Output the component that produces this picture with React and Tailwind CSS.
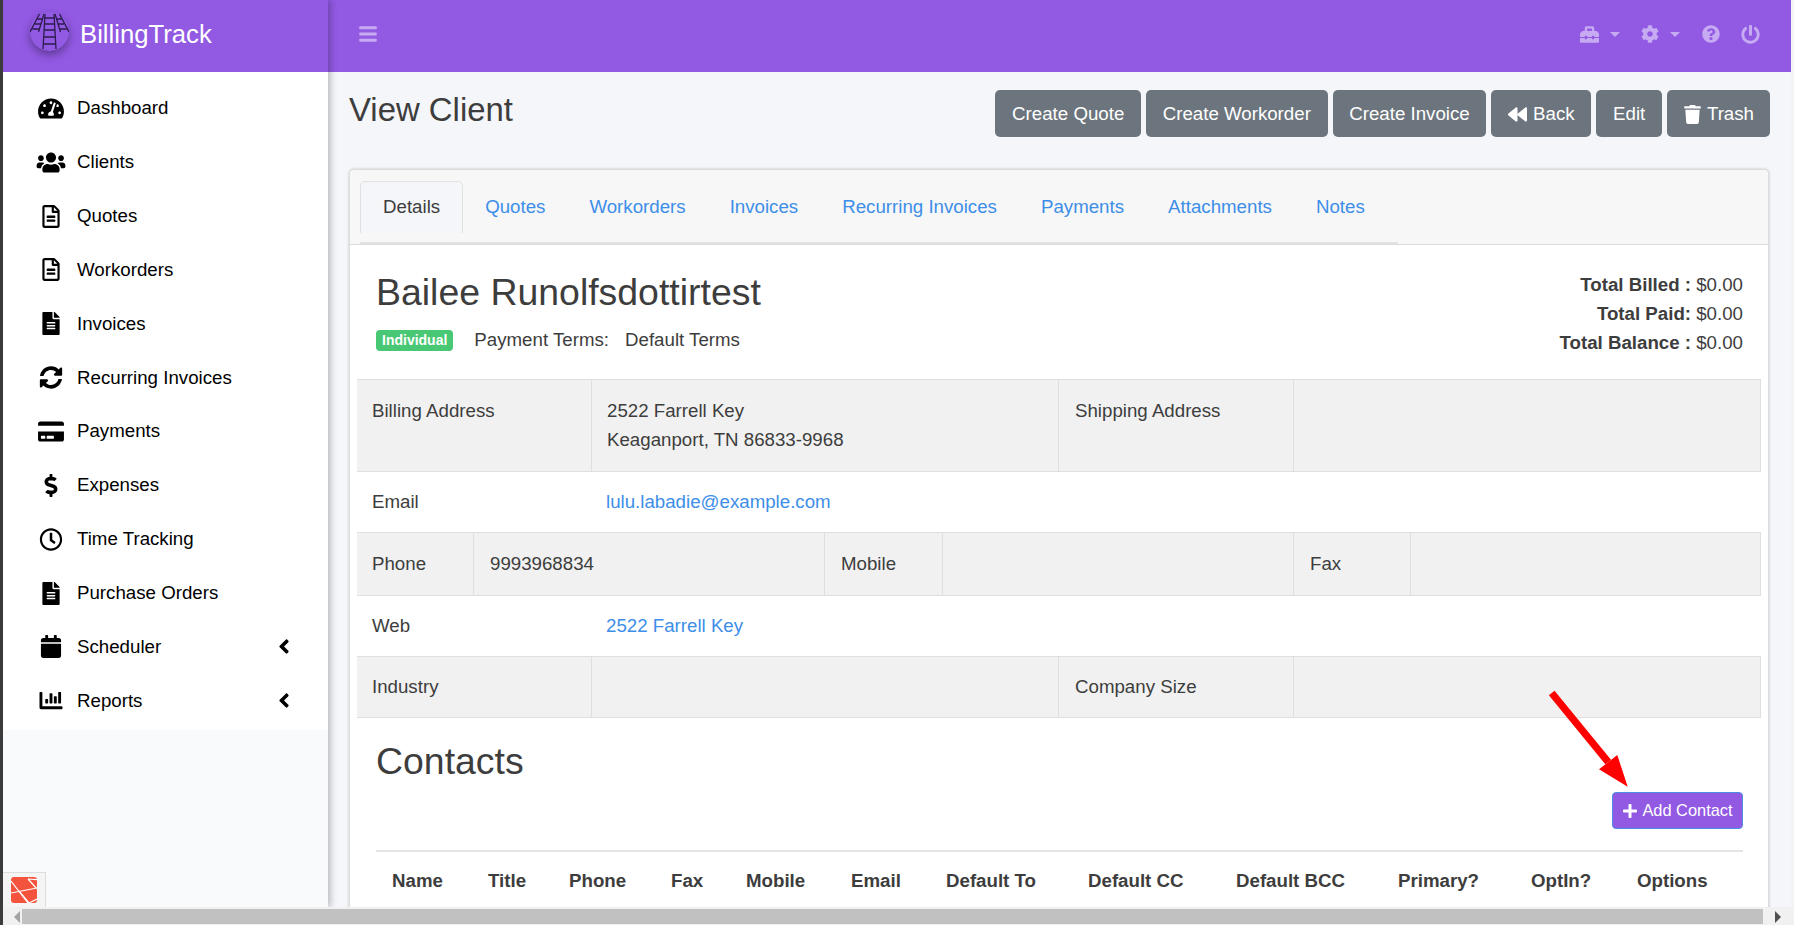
import React from "react";
import {
  FaTachometerAlt,
  FaUsers,
  FaRegFileAlt,
  FaFileAlt,
  FaSyncAlt,
  FaCreditCard,
  FaDollarSign,
  FaRegClock,
  FaCalendar,
  FaChartBar,
  FaAngleLeft,
  FaBars,
  FaToolbox,
  FaCog,
  FaQuestionCircle,
  FaPowerOff,
  FaBackward,
  FaTrash,
  FaPlus,
} from "react-icons/fa";

const NAV = [
  { label: "Dashboard", icon: FaTachometerAlt },
  { label: "Clients", icon: FaUsers },
  { label: "Quotes", icon: FaRegFileAlt },
  { label: "Workorders", icon: FaRegFileAlt },
  { label: "Invoices", icon: FaFileAlt },
  { label: "Recurring Invoices", icon: FaSyncAlt },
  { label: "Payments", icon: FaCreditCard },
  { label: "Expenses", icon: FaDollarSign },
  { label: "Time Tracking", icon: FaRegClock },
  { label: "Purchase Orders", icon: FaFileAlt },
  { label: "Scheduler", icon: FaCalendar, arrow: true },
  { label: "Reports", icon: FaChartBar, arrow: true },
];

const TABS = ["Quotes", "Workorders", "Invoices", "Recurring Invoices", "Payments", "Attachments", "Notes"];

const HEADS = [
  ["w-[96px]", "Name"],
  ["w-[81px]", "Title"],
  ["w-[102px]", "Phone"],
  ["w-[75px]", "Fax"],
  ["w-[105px]", "Mobile"],
  ["w-[95px]", "Email"],
  ["w-[142px]", "Default To"],
  ["w-[148px]", "Default CC"],
  ["w-[162px]", "Default BCC"],
  ["w-[133px]", "Primary?"],
  ["w-[106px]", "OptIn?"],
  ["flex-1", "Options"],
];

const Logo = () => (
  <div className="relative w-[39px] h-[39px] -mt-[5px] rounded-full bg-[#9259e3] shadow-[0_4px_8px_rgba(0,0,0,0.35)]">
    <svg viewBox="0 0 39 39" className="absolute inset-0 w-[39px] h-[39px]" fill="none" stroke="#2d1b4e" strokeWidth="1.3">
      {/* middle track */}
      <path d="M15 2L13 37M24 2L26 37M14.5 6H24.5M14 12H25M14 18H25M13.5 25H25.5M13 32H26" />
      {/* left and right tracks */}
      <path d="M9.5 2L0 20M14 2L8.5 20M7 7H13M5 12H11.5M2.5 17H9.5" />
      <path d="M29.5 2L39 20M25 2L30.5 20M26 7H32M27.5 12H34M29.5 17H36.5" />
    </svg>
  </div>
);

const Cell = ({ w, children }) => (
  <div className={`${w} flex-none flex items-center px-[16px] first:px-[15px] border-r border-[#dfdfdf]`}>{children}</div>
);

const App = () => {
  return (
    <div className="relative w-[1794px] h-[925px] overflow-hidden flex bg-[#f4f6f9] text-[#3d3d3d] font-['Liberation_Sans',Arial,sans-serif] text-[18.7px]">
      <div className="w-[3px] flex-none bg-[#3c3c3c]" />

      <div className="flex-1 min-w-0 flex flex-col">
        <div className="flex flex-1 min-h-0">
          {/* Sidebar */}
          <aside className="relative z-10 w-[325px] flex-none flex flex-col bg-[#f9fafb] shadow-[3px_0_6px_rgba(0,0,0,0.22)]">
            <div className="h-[72px] flex-none bg-[#9259e3] flex items-center pl-[27px] pb-[4px] gap-[11px] text-white text-[25.7px]">
              <Logo />
              <span>BillingTrack</span>
            </div>
            <nav className="h-[658px] bg-white pt-[9.5px]">
              {NAV.map(({ label, icon: Icon, arrow }) => (
                <div key={label} className="h-[53.85px] flex items-center text-black">
                  <div className="w-[74px] pl-[33px] flex-none">
                    <Icon className="w-[30px] h-[23px]" />
                  </div>
                  <span className="flex-1">{label}</span>
                  {arrow && (
                    <div className="w-[12px] mr-[38px] flex justify-center">
                      <FaAngleLeft className="h-[23px] w-auto" />
                    </div>
                  )}
                </div>
              ))}
            </nav>
          </aside>

          {/* Main column */}
          <main className="flex-1 min-w-0 flex flex-col">
            <header className="h-[72px] flex-none bg-[#9259e3] flex items-center pl-[30px] pr-[31px] pb-[4px] text-[#c7abf2]">
              <FaBars className="h-[20px] w-auto" />
              <div className="ml-auto flex items-center">
                <FaToolbox className="h-[19px] w-auto" />
                <span className="ml-[11px] w-0 h-0 border-x-[5px] border-x-transparent border-t-[5px] border-t-[#c7abf2]" />
                <FaCog className="ml-[21px] h-[18px] w-auto" />
                <span className="ml-[11px] w-0 h-0 border-x-[5px] border-x-transparent border-t-[5px] border-t-[#c7abf2]" />
                <FaQuestionCircle className="ml-[22px] h-[18px] w-auto" />
                <FaPowerOff className="ml-[21px] h-[19px] w-auto" />
              </div>
            </header>

            <div className="flex-1 min-h-0 pl-[21px] pr-[22px]">
              <div className="flex items-start justify-between pt-[18px] h-[97px]">
                <h1 className="text-[32.9px] leading-[38px] mt-[1px]">View Client</h1>
                <div className="flex gap-[5px] -mr-[1px] text-white">
                  {["Create Quote", "Create Workorder", "Create Invoice"].map((b) => (
                    <button key={b} className="h-[47px] px-[16.7px] pt-[1px] rounded-[5px] bg-[#6c757d]">{b}</button>
                  ))}
                  <button className="h-[47px] px-[16.7px] pt-[1px] rounded-[5px] bg-[#6c757d] flex items-center gap-[6px]">
                    <FaBackward className="h-[19px] w-auto" />Back
                  </button>
                  <button className="h-[47px] px-[16.7px] pt-[1px] rounded-[5px] bg-[#6c757d]">Edit</button>
                  <button className="h-[47px] px-[16px] pt-[1px] rounded-[5px] bg-[#6c757d] flex items-center gap-[5px]">
                    <FaTrash className="h-[19px] w-auto" />Trash
                  </button>
                </div>
              </div>

              {/* Card */}
              <section className="bg-white rounded-t-[5px] border border-[#dcdcdc] border-b-0 shadow-[0_0_3px_rgba(0,0,0,0.2)] h-[760px]">
                <div className="h-[75px] bg-[#f7f7f7] pt-[11px] pl-[10px] border-b border-[#dcdcdc] rounded-t-[5px]">
                  <div className="flex items-start w-[1038px] h-[63px] border-b-2 border-[#e2e2e2]">
                    <div className="h-[52px] px-[22px] flex items-center bg-[#f4f6f9] border border-b-0 border-[#e1e1e1] rounded-t-[5px]">Details</div>
                    {TABS.map((t) => (
                      <div key={t} className="h-[52px] px-[22px] flex items-center text-[#3d8ee8]">{t}</div>
                    ))}
                  </div>
                </div>

                <div className="flex justify-between pl-[26px] pr-[25px] h-[134px]">
                  <div>
                    <h2 className="text-[37.44px] leading-[45px] mt-[25px]">Bailee Runolfsdottirtest</h2>
                    <div className="flex items-center mt-[11px]">
                      <span className="h-[21px] px-[6px] rounded-[4px] bg-[#48c774] text-white font-bold text-[14px] flex items-center">Individual</span>
                      <span className="ml-[21px]">Payment Terms:</span>
                      <span className="ml-[16px]">Default Terms</span>
                    </div>
                  </div>
                  <div className="text-right mt-[25px] leading-[29px]">
                    <p><b>Total Billed :</b> $0.00</p>
                    <p><b>Total Paid:</b> $0.00</p>
                    <p><b>Total Balance :</b> $0.00</p>
                  </div>
                </div>

                {/* Info table */}
                <div className="mx-[7px] border-t border-[#dfdfdf]">
                  <div className="h-[92px] flex bg-[#f1f1f1] border-b border-[#dfdfdf] leading-[29px]">
                    <div className="w-[235px] flex-none px-[15px] pt-[16px] border-r border-[#dfdfdf]">Billing Address</div>
                    <div className="w-[467px] flex-none px-[15px] pt-[16px] border-r border-[#dfdfdf]">
                      <p>2522 Farrell Key</p>
                      <p>Keaganport, TN 86833-9968</p>
                    </div>
                    <div className="w-[235px] flex-none px-[16px] pt-[16px] border-r border-[#dfdfdf]">Shipping Address</div>
                    <div className="flex-1 border-r border-[#dfdfdf]" />
                  </div>
                  <div className="h-[61px] flex items-center border-b border-[#dfdfdf]">
                    <div className="w-[235px] px-[15px]">Email</div>
                    <div className="px-[14px] text-[#3d8ee8]">lulu.labadie@example.com</div>
                  </div>
                  <div className="h-[63px] flex items-stretch bg-[#f1f1f1] border-b border-[#dfdfdf]">
                    <Cell w="w-[117px]">Phone</Cell>
                    <Cell w="w-[351px]">9993968834</Cell>
                    <Cell w="w-[118px]">Mobile</Cell>
                    <Cell w="w-[351px]" />
                    <Cell w="w-[117px]">Fax</Cell>
                    <div className="flex-1 border-r border-[#dfdfdf]" />
                  </div>
                  <div className="h-[61px] flex items-center border-b border-[#dfdfdf]">
                    <div className="w-[235px] px-[15px]">Web</div>
                    <div className="px-[14px] text-[#3d8ee8]">2522 Farrell Key</div>
                  </div>
                  <div className="h-[61px] flex items-stretch bg-[#f1f1f1] border-b border-[#dfdfdf]">
                    <Cell w="w-[235px]">Industry</Cell>
                    <Cell w="w-[467px]" />
                    <Cell w="w-[235px]">Company Size</Cell>
                    <div className="flex-1 border-r border-[#dfdfdf]" />
                  </div>
                </div>

                {/* Contacts */}
                <div className="pl-[26px] pr-[25px]">
                  <div className="flex justify-between h-[134px] border-b-2 border-[#e4e4e4]">
                    <h3 className="text-[37.44px] leading-[43px] mt-[22px]">Contacts</h3>
                    <button className="self-start mt-[74px] h-[37px] w-[131px] rounded-[4px] bg-[#9259e3] border border-[#4a90e2] text-white text-[16.4px] flex items-center justify-center gap-[4px]">
                      <FaPlus className="h-[16px] w-auto" />Add Contact
                    </button>
                  </div>
                  <div className="flex h-[58px] items-center font-bold">
                    {HEADS.map(([w, h]) => (
                      <div key={h} className={`${w} pl-[16px] whitespace-nowrap`}>{h}</div>
                    ))}
                  </div>
                </div>
              </section>
            </div>
          </main>

          <div className="w-[3px] flex-none bg-[#f3f3f3]" />
        </div>

        {/* Window scrollbar */}
        <div className="relative z-20 h-[18px] flex-none flex pt-[2px] pb-[1px] bg-[#f1f1f1]">
          <div className="w-[19px] flex items-center justify-end pr-[2px]">
            <span className="w-0 h-0 border-y-[6px] border-y-transparent border-r-[6px] border-r-[#a3a3a3]" />
          </div>
          <div className="w-[1741px] bg-[#c1c1c1]" />
          <div className="flex-1 flex items-center justify-center pr-[2px]">
            <span className="w-0 h-0 border-y-[6px] border-y-transparent border-l-[6px] border-l-[#505050]" />
          </div>
        </div>
      </div>

      {/* Debugbar tab */}
      <div className="absolute z-20 left-[3px] top-[872px] w-[43px] h-[35px] bg-[#f5f5f5] border-t border-r border-[#dddddd] flex items-center justify-center">
        <svg viewBox="0 0 26 26" className="w-[26px] h-[26px]">
          <rect width="26" height="26" rx="3" fill="#f4533d" />
          <path d="M0 4L17 26M0 16L26 11M17 2L26 2.7M17 2L26 12M8 14L18 26L26 22" stroke="#fff" strokeWidth="1.2" fill="none" />
        </svg>
      </div>

      {/* Annotation arrow */}
      <svg className="absolute z-20 left-[1540px] top-[680px] w-[100px] h-[115px] pointer-events-none" viewBox="0 0 100 115">
        <path d="M11.7 13L68.2 82" stroke="#ff0000" strokeWidth="7.3" />
        <path d="M87.7 106.7L59 89.3L77.3 75Z" fill="#ff0000" />
      </svg>
    </div>
  );
};

export default App;
